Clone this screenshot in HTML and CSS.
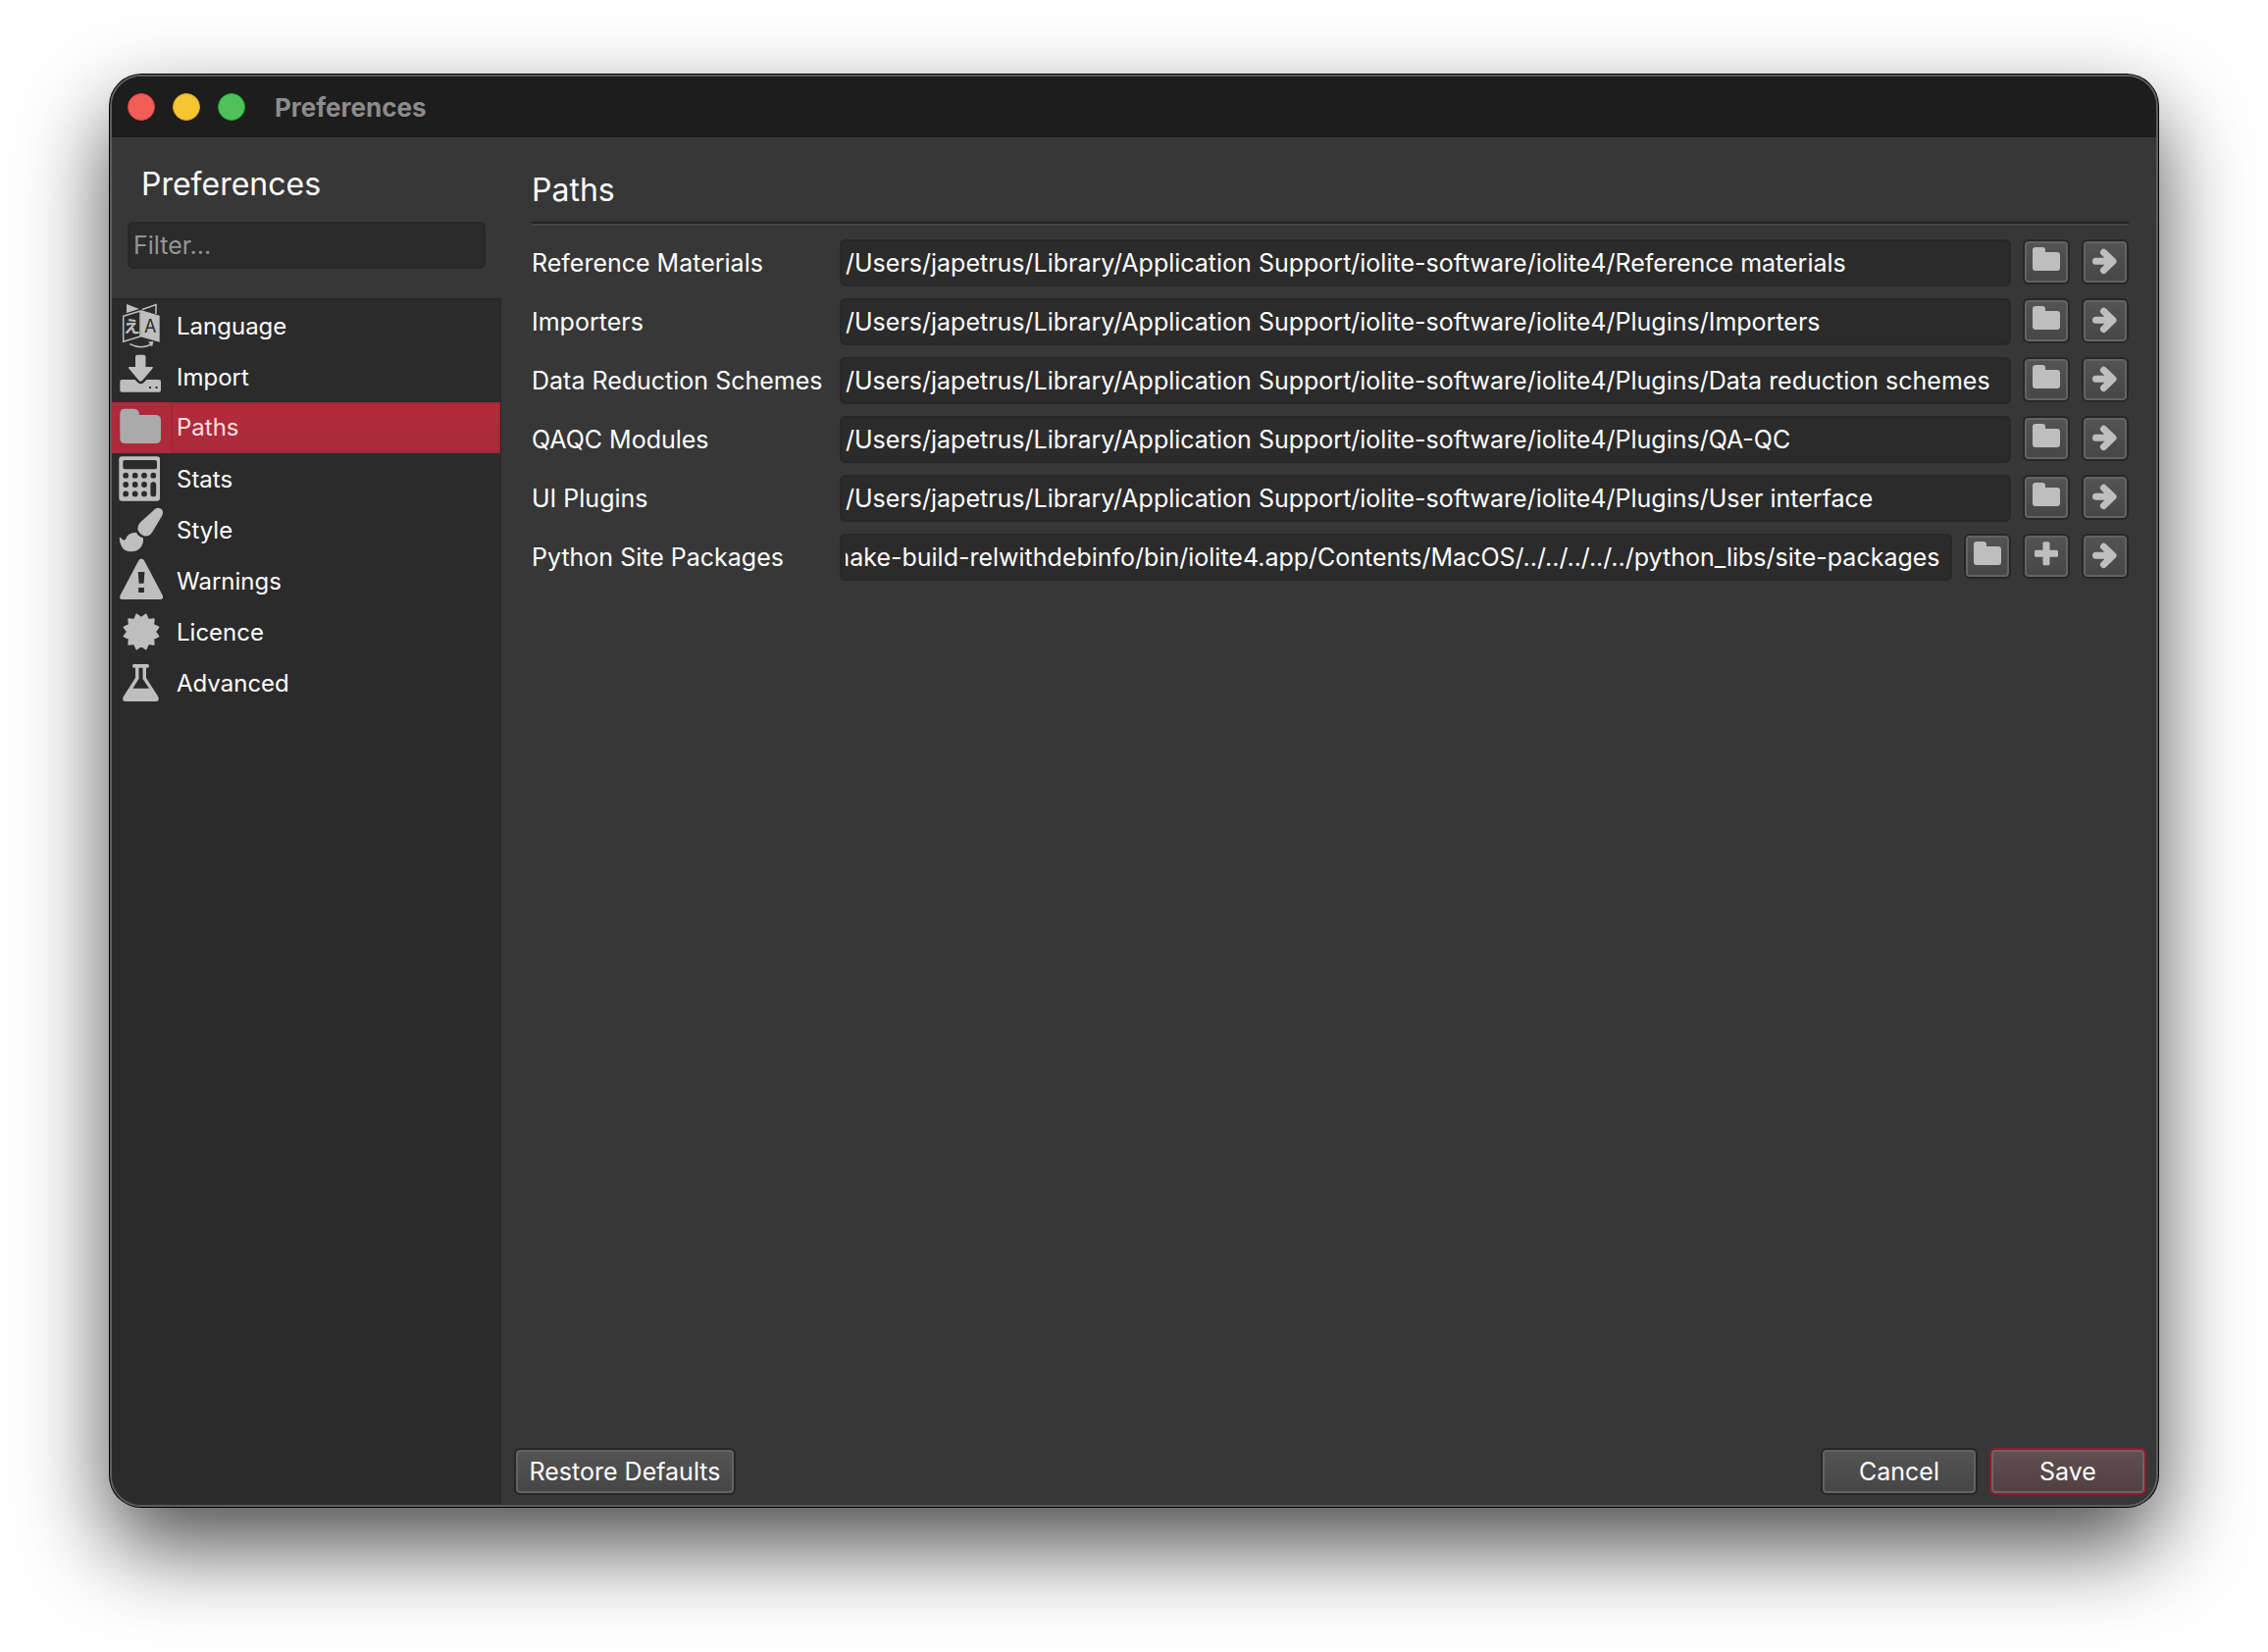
FILE: index.html
```html
<!DOCTYPE html>
<html lang="en">
<head>
  <meta charset="UTF-8">
  <title>Preferences</title>
  <link rel="stylesheet" href="styles.css">
</head>
<body>

  <svg class="defs" width="0" height="0" aria-hidden="true">
    <symbol id="folder" viewBox="0 0 48 46">
      <path d="M13 8h7q3 0 3 3v2h12q3 0 3 3v9q0 3-3 3H13q-3 0-3-3V11q0-3 3-3z"/>
      <path d="M10 20h28v9q0 3-3 3H13q-3 0-3-3z"/>
    </symbol>
    <symbol id="arrow" viewBox="0 0 48 46">
      <path class="line" d="M14.500 22.300H30M22.500 13.300L32 22.300L22.500 31.500"/>
    </symbol>
    <symbol id="plus" viewBox="0 0 48 46">
      <path d="M22 8.300h4q1.500 0 1.500 1.500v7h7q1.500 0 1.500 1.500v4q0 1.500-1.500 1.500h-7v7q0 1.500-1.500 1.500h-4q-1.500 0-1.500-1.500v-7h-7q-1.500 0-1.500-1.500v-4q0-1.500 1.500-1.500h7v-7q0-1.500 1.500-1.500z"/>
    </symbol>
  </svg>

  <div class="window">
    <header class="titlebar">
      <button class="light close" type="button" aria-label="Close"></button>
      <button class="light minimize" type="button" aria-label="Minimize"></button>
      <button class="light zoom" type="button" aria-label="Zoom"></button>
      <span class="window-title">Preferences</span>
    </header>

    <div class="main">
      <aside class="sidebar">
        <h1>Preferences</h1>
        <input class="field filter" type="text" placeholder="Filter..." aria-label="Filter">
        <nav class="pages">
          <button class="page" type="button">
            <svg viewBox="0 0 60 52">
              <path d="M15 4L28 9L15 13z"/>
              <path class="thin" d="M31 9.500L45 4.500V14M11.700 16.200L29 11V37L11.700 42.200z"/>
              <path d="M29.300 10L48.700 15.700V42.700L29.300 37.300z"/>
              <text class="glyph-cjk" x="12" y="33">え</text>
              <text class="glyph-a" x="33" y="33">A</text>
              <path class="thin" d="M18.300 44.700Q29.300 50.500 40.500 45"/>
              <path d="M37 42.500L42.500 42L41 47.500z"/>
            </svg>
            Language
          </button>
          <button class="page" type="button">
            <svg viewBox="0 0 60 52">
              <path d="M26 3.700h6.500q2 0 2 2V16H41q1.800 0 .6 1.500L31 30q-1.700 1.500-3.300 0L17.200 17.500Q16 16 17.500 16H24V5.700q0-2 2-2z"/>
              <path fill-rule="evenodd" d="M10.300 29H23.500l3 3q3 2.500 6 0l3-3H48q2 0 2 2v8.700q0 2-2 2H10.300q-2 0-2-2V31q0-2 2-2zM38 36h2v2h-2zM44.500 36h2v2h-2z"/>
            </svg>
            Import
          </button>
          <button class="page selected" type="button">
            <svg viewBox="0 0 60 52">
              <path d="M13.300 6.700H22q6 0 6 6.300h16.500q5.500 0 5.500 5.500v18q0 5.500-5.500 5.500H13.800q-5.500 0-5.500-5.500V12q0-5.300 5-5.300z"/>
            </svg>
            <span class="page-text">Paths</span>
          </button>
          <button class="page" type="button">
            <svg viewBox="0 0 60 52">
              <rect x="7.300" y="3.300" width="41.700" height="45.400" rx="3"/>
              <g class="hole">
                <rect x="11.300" y="7" width="34.700" height="9.300" rx="2"/>
                <circle cx="14.200" cy="22.700" r="2.900"/><circle cx="23.700" cy="22.700" r="2.900"/><circle cx="33" cy="22.700" r="2.900"/><circle cx="42.300" cy="22.700" r="2.900"/>
                <circle cx="14.200" cy="32" r="2.900"/><circle cx="23.700" cy="32" r="2.900"/><circle cx="33" cy="32" r="2.900"/>
                <circle cx="14.200" cy="41.400" r="2.900"/><circle cx="23.700" cy="41.400" r="2.900"/><circle cx="33" cy="41.400" r="2.900"/>
                <rect x="39.400" y="29.200" width="5.800" height="15.100" rx="2.900"/>
              </g>
            </svg>
            Stats
          </button>
          <button class="page" type="button">
            <svg viewBox="0 0 60 52">
              <path d="M44.500 4.500Q48 2.500 51 5.200Q53 8 51 12L41.500 28Q38.500 33 33.500 32.500Q28.500 31 26.500 26Q26 21.500 29.500 18z"/>
              <path d="M25 28.800Q27 33 32 34.500Q32.500 41 28.500 45Q25 48.300 20 48.300Q12 48.300 9.500 42Q7.500 38 7.800 33.800Q9 33.600 10 35.200Q12 37.200 14 36Q16 28.800 25 28.800z"/>
            </svg>
            Style
          </button>
          <button class="page" type="button">
            <svg viewBox="0 0 60 52">
              <path d="M27.500 5Q30 1.800 32.800 5L51.800 41Q53 45 49.500 45H10.500Q7 45 8.500 41z"/>
              <path class="hole" d="M26.800 17h6.600l-.8 11.700h-5zM27.200 33h5.700v5h-5.700z"/>
            </svg>
            Warnings
          </button>
          <button class="page" type="button">
            <svg viewBox="0 0 60 52">
              <path class="round" d="M30 12L34.700 8.600L37 13.900L42.700 13.300L42.100 19L47.400 21.300L44 26L47.400 30.700L42.100 33L42.700 38.700L37 38.100L34.700 43.400L30 40L25.300 43.400L23 38.100L17.300 38.700L17.900 33L12.600 30.700L16 26L12.600 21.300L17.900 19L17.300 13.300L23 13.900L25.300 8.600z"/>
            </svg>
            Licence
          </button>
          <button class="page" type="button">
            <svg viewBox="0 0 60 52">
              <path fill-rule="evenodd" d="M22.500 7H36.300q1.700 0 1.700 1.800T36.300 10.700H35V21L47 39.800Q49.500 45 44.500 45H14.500Q9.500 45 12 39.800L24 21V10.700H22.500Q21 10.700 21 8.800T22.500 7zM27.500 10.700V22L21.300 31.700H38L31.500 22V10.700z"/>
            </svg>
            Advanced
          </button>
        </nav>
      </aside>

      <form class="content">
        <section class="paths">
          <h2>Paths</h2>
          <div class="row">
            <label for="reference">Reference Materials</label>
            <input class="field" type="text" id="reference" value="/Users/japetrus/Library/Application Support/iolite-software/iolite4/Reference materials">
            <button class="tool" type="button" aria-label="Browse"><svg><use href="#folder"/></svg></button>
            <button class="tool" type="button" aria-label="Open"><svg><use href="#arrow"/></svg></button>
          </div>
          <div class="row">
            <label for="importers">Importers</label>
            <input class="field" type="text" id="importers" value="/Users/japetrus/Library/Application Support/iolite-software/iolite4/Plugins/Importers">
            <button class="tool" type="button" aria-label="Browse"><svg><use href="#folder"/></svg></button>
            <button class="tool" type="button" aria-label="Open"><svg><use href="#arrow"/></svg></button>
          </div>
          <div class="row">
            <label for="schemes">Data Reduction Schemes</label>
            <input class="field" type="text" id="schemes" value="/Users/japetrus/Library/Application Support/iolite-software/iolite4/Plugins/Data reduction schemes">
            <button class="tool" type="button" aria-label="Browse"><svg><use href="#folder"/></svg></button>
            <button class="tool" type="button" aria-label="Open"><svg><use href="#arrow"/></svg></button>
          </div>
          <div class="row">
            <label for="qaqc">QAQC Modules</label>
            <input class="field" type="text" id="qaqc" value="/Users/japetrus/Library/Application Support/iolite-software/iolite4/Plugins/QA-QC">
            <button class="tool" type="button" aria-label="Browse"><svg><use href="#folder"/></svg></button>
            <button class="tool" type="button" aria-label="Open"><svg><use href="#arrow"/></svg></button>
          </div>
          <div class="row">
            <label for="plugins">UI Plugins</label>
            <input class="field" type="text" id="plugins" value="/Users/japetrus/Library/Application Support/iolite-software/iolite4/Plugins/User interface">
            <button class="tool" type="button" aria-label="Browse"><svg><use href="#folder"/></svg></button>
            <button class="tool" type="button" aria-label="Open"><svg><use href="#arrow"/></svg></button>
          </div>
          <div class="row">
            <label for="python">Python Site Packages</label>
            <input class="field" type="text" id="python" value="/cmake-build-relwithdebinfo/bin/iolite4.app/Contents/MacOS/../../../../../python_libs/site-packages">
            <button class="tool" type="button" aria-label="Browse"><svg><use href="#folder"/></svg></button>
            <button class="tool" type="button" aria-label="Add"><svg><use href="#plus"/></svg></button>
            <button class="tool" type="button" aria-label="Open"><svg><use href="#arrow"/></svg></button>
          </div>
        </section>

        <footer class="actions">
          <button class="btn restore" type="button">Restore Defaults</button>
          <button class="btn" type="button">Cancel</button>
          <button class="btn save" type="submit">Save</button>
        </footer>
      </form>
    </div>
  </div>

  <script>
    // show the end of the long path
    const python = document.getElementById("python");
    python.scrollLeft = python.scrollWidth;
  </script>

</body>
</html>
```
FILE: styles.css
```css
* {
  box-sizing: border-box;
}
body {
  margin: 0;
  padding: 76px 112px 148px;
  min-height: 100vh;
  display: flex;
  background: #fff;
  color: #fff;
  font-family: Inter, "Liberation Sans", sans-serif;
  font-size: 25px;
}
button, input {
  font: inherit;
  color: inherit;
}
svg {
  display: block;
  fill: #bebebe;
}
.defs {
  position: absolute;
}
.window {
  flex: 1;
  display: flex;
  flex-direction: column;
  overflow: hidden;
  border: 2px solid #5e5e5e;
  border-radius: 32px;
  background: #373737;
  box-shadow: 0 0 0 1px #000, 0 40px 90px rgba(0, 0, 0, 0.7);
}

/* title bar */
.titlebar {
  display: flex;
  align-items: center;
  gap: 18px;
  height: 62px;
  padding: 0 16px;
  background: #1d1d1d;
}
.light {
  width: 28px;
  height: 28px;
  padding: 0;
  border: 1px solid;
  border-radius: 50%;
}
.close {
  background: #f25e57;
  border-color: #e0443e;
}
.minimize {
  background: #f4c530;
  border-color: #dea123;
}
.zoom {
  background: #50c15a;
  border-color: #1aab29;
}
.window-title {
  margin-left: 12px;
  font-size: 26px;
  font-weight: 700;
  color: #8c8c8c;
}

.main {
  flex: 1;
  display: flex;
}

/* sidebar */
.sidebar {
  flex: 0 0 397px;
  min-width: 0;
  display: flex;
  flex-direction: column;
}
h1, h2 {
  margin: 0;
  font-size: 32px;
  line-height: 44px;
  font-weight: 400;
}
h1 {
  padding: 26px 30px 16px;
}
.field {
  min-width: 0;
  height: 48px;
  padding: 0 10px 0 4px;
  border: 2px solid #272727;
  border-radius: 6px;
  background: #2b2b2b;
  outline: none;
}
.filter {
  margin: 0 16px 30px;
}
.filter::placeholder {
  color: #959595;
}
.pages {
  flex: 1;
  border: solid #272727;
  border-width: 2px 1px 0 0;
  background: #2b2b2b;
}
.page {
  display: flex;
  align-items: center;
  gap: 6px;
  width: 100%;
  height: 52px;
  padding: 0;
  border: 0;
  background: none;
  font-size: 24px;
}
.page svg {
  width: 60px;
  height: 52px;
}
.selected {
  gap: 0;
  background: #ae2a3b;
  color: #fbdfe2;
}
.selected svg {
  fill: #aaa;
}
.page-text {
  flex: 1;
  padding-left: 4px;
  border: 2px solid #a02837;
  line-height: 48px;
  text-align: left;
  background: linear-gradient(#b32b3b, #a92a3a);
}
.thin {
  fill: none;
  stroke: #bebebe;
  stroke-width: 1.5;
}
.line {
  fill: none;
  stroke: #bebebe;
  stroke-width: 7;
  stroke-linecap: round;
  stroke-linejoin: round;
}
.round {
  stroke: #bebebe;
  stroke-width: 2;
  stroke-linejoin: round;
}
.hole {
  fill: #2b2b2b;
}
.glyph-cjk {
  font: 700 17px "Noto Sans CJK JP", sans-serif;
}
.glyph-a {
  fill: #2b2b2b;
  font-size: 18px;
}

/* page content */
.content {
  flex: 1;
  min-width: 0;
  display: flex;
  flex-direction: column;
  justify-content: space-between;
  padding: 32px 10px 10px 13px;
}
.paths {
  display: flex;
  flex-direction: column;
  gap: 12px;
  padding: 0 18px;
}
h2 {
  padding-bottom: 10px;
  border-bottom: 2px solid #222;
  box-shadow: 0 2px #454545;
  margin-bottom: 4px;
}
.row {
  display: flex;
  gap: 12px;
}
.row label {
  flex: 0 0 302px;
  line-height: 48px;
  white-space: nowrap;
}
.row .field {
  flex: 1;
}
.tool, .btn {
  border: 2px solid #272727;
  border-radius: 6px;
  background: linear-gradient(#545454, #464646);
  box-shadow: inset 0 0 0 2px #636363;
}
.tool {
  width: 48px;
  height: 46px;
  padding: 0;
}
.tool svg {
  width: 48px;
  height: 46px;
  margin: -2px;
}
.actions {
  display: flex;
  gap: 12px;
}
.btn {
  width: 160px;
  height: 48px;
  padding: 0;
}
.restore {
  width: 226px;
  margin-right: auto;
}
.save {
  border-color: #8c1c2c;
  background: linear-gradient(#615052, #514043);
  box-shadow: inset 0 0 0 2px #716264;
}
```
